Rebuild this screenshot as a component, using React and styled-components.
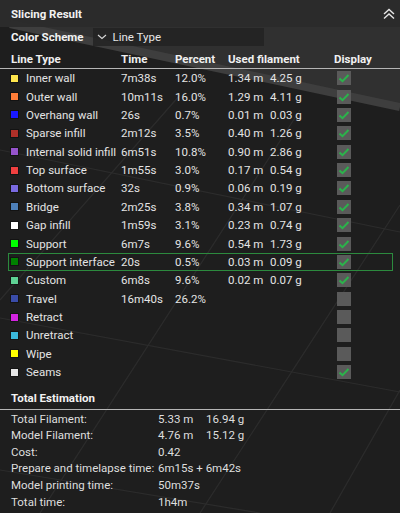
import styled, { createGlobalStyle } from 'styled-components'

const GlobalStyle = createGlobalStyle`
    html, body {
        margin: 0;
        padding: 0;
        background: #1e1e1e;
    }
    body {
        font-family: Roboto, "Liberation Sans", sans-serif;
        color: #e4e4e4;
    }
`

const lineTypes = [
    { name: 'Inner wall', color: '#ffe64d', time: '7m38s', percent: '12.0%', meters: '1.34 m', grams: '4.25 g', shown: true },
    { name: 'Outer wall', color: '#ff7d38', time: '10m11s', percent: '16.0%', meters: '1.29 m', grams: '4.11 g', shown: true },
    { name: 'Overhang wall', color: '#1919ff', time: '26s', percent: '0.7%', meters: '0.01 m', grams: '0.03 g', shown: true },
    { name: 'Sparse infill', color: '#b03029', time: '2m12s', percent: '3.5%', meters: '0.40 m', grams: '1.26 g', shown: true },
    { name: 'Internal solid infill', color: '#9654cc', time: '6m51s', percent: '10.8%', meters: '0.90 m', grams: '2.86 g', shown: true },
    { name: 'Top surface', color: '#f04040', time: '1m55s', percent: '3.0%', meters: '0.17 m', grams: '0.54 g', shown: true },
    { name: 'Bottom surface', color: '#7a6ae0', time: '32s', percent: '0.9%', meters: '0.06 m', grams: '0.19 g', shown: true },
    { name: 'Bridge', color: '#4d80ba', time: '2m25s', percent: '3.8%', meters: '0.34 m', grams: '1.07 g', shown: true },
    { name: 'Gap infill', color: '#ffffff', time: '1m59s', percent: '3.1%', meters: '0.23 m', grams: '0.74 g', shown: true },
    { name: 'Support', color: '#00ff00', time: '6m7s', percent: '9.6%', meters: '0.54 m', grams: '1.73 g', shown: true },
    { name: 'Support interface', color: '#008000', time: '20s', percent: '0.5%', meters: '0.03 m', grams: '0.09 g', shown: true, active: true },
    { name: 'Custom', color: '#5ed194', time: '6m8s', percent: '9.6%', meters: '0.02 m', grams: '0.07 g', shown: true },
    { name: 'Travel', color: '#3a4ca8', time: '16m40s', percent: '26.2%', shown: false },
    { name: 'Retract', color: '#d324e0', shown: false },
    { name: 'Unretract', color: '#3ab8db', shown: false },
    { name: 'Wipe', color: '#ffff00', shown: false },
    { name: 'Seams', color: '#e6e6e6', shown: true },
]

const estimation = [
    { label: 'Total Filament:', value: '5.33 m', extra: '16.94 g' },
    { label: 'Model Filament:', value: '4.76 m', extra: '15.12 g' },
    { label: 'Cost:', value: '0.42' },
    { label: 'Prepare and timelapse time:', value: '6m15s + 6m42s' },
    { label: 'Model printing time:', value: '50m37s' },
    { label: 'Total time:', value: '1h4m' },
]

const Viewport = styled.div`
    position: relative;
    width: 400px;
    height: 513px;
    overflow: hidden;
    background: #1e1e1e;
`

const Backdrop = styled.svg`
    position: absolute;
    inset: 0;
    width: 100%;
    height: 100%;
`

const Panel = styled.div`
    position: relative;
    display: flex;
    flex-direction: column;
    font-size: 11.5px;
`

const TitleBar = styled.div`
    display: flex;
    align-items: center;
    justify-content: space-between;
    height: 27px;
    padding: 0 4px 0 11px;
    box-sizing: border-box;
    background: rgba(44, 44, 44, 0.96);
`

const Heading = styled.div`
    font-weight: 700;
    font-size: ${props => props.size || '11.5px'};
    color: #f2f2f2;
`

const SchemeRow = styled.div`
    display: flex;
    align-items: center;
    gap: 9px;
    height: 20px;
    padding-left: 11px;
`

const SchemeSelect = styled.div`
    display: flex;
    align-items: center;
    gap: 6px;
    width: 171px;
    height: 18px;
    padding-left: 4px;
    box-sizing: border-box;
    background: rgba(32, 32, 32, 0.75);
    color: #e6e6e6;
`

const Grid = styled.div`
    display: grid;
    grid-template-columns: 110px 54px 53px 42px 64px 1fr;
    align-items: center;
`

const HeaderRow = styled(Grid)`
    height: 22px;
    padding: 2px 0 0 11px;
    box-sizing: border-box;
    border-bottom: 1px solid #b5b5b5;
    font-weight: 700;
    color: #f0f0f0;
`

const Span2 = styled.div`
    grid-column: span 2;
`

const Row = styled(Grid)`
    height: 18.375px;
    box-sizing: border-box;
    margin: 0 7px 0 8px;
    padding-left: 2px;
    border: 1px solid ${props => props.active ? '#2c8a3e' : 'transparent'};
    white-space: nowrap;
`

const NameCell = styled.div`
    display: flex;
    align-items: center;
    gap: 8px;
`

const Swatch = styled.span`
    width: 7px;
    height: 7px;
    background: ${props => props.color};
    box-shadow: 0 0 0 1px rgba(0, 0, 0, 0.35);
`

const CheckBox = styled.div`
    display: flex;
    align-items: center;
    justify-content: center;
    width: 14px;
    height: 14px;
    margin-left: 3px;
    background: #5a5a5a;
`

const SectionTitle = styled.div`
    display: flex;
    align-items: center;
    height: 23px;
    margin-top: 5px;
    padding-left: 11px;
    border-bottom: 1px solid #b5b5b5;
`

const EstimationList = styled.div`
    display: flex;
    flex-direction: column;
`

const EstimationRow = styled.div`
    display: grid;
    grid-template-columns: 147px 48px 1fr;
    align-items: center;
    height: 16.6px;
    padding-left: 11px;
    color: #dedede;
    white-space: nowrap;
`

const DoubleChevron = () => (
    <svg width="14" height="12" viewBox="0 0 14 12">
        <path d="M2 6 L7 1.5 L12 6 M2 10.5 L7 6 L12 10.5" fill="none" stroke="#e6e6e6" strokeWidth="1.4" />
    </svg>
)

const ChevronDown = () => (
    <svg width="10" height="6" viewBox="0 0 10 6">
        <path d="M1 1 L5 4.5 L9 1" fill="none" stroke="#d8d8d8" strokeWidth="1.1" />
    </svg>
)

const Check = () => (
    <svg width="12" height="10" viewBox="0 0 12 10">
        <path d="M1.5 5.5 L4.5 8.2 L10.5 2" fill="none" stroke="#2bb34b" strokeWidth="2" />
    </svg>
)

// plate and grid of the 3d view behind the panel
const SceneBackdrop = () => (
    <Backdrop viewBox="0 0 400 513" preserveAspectRatio="none">
        <rect width="400" height="513" fill="#1e1e1e" />
        <polygon points="20,27 400,27 400,104" fill="#303030" />
        <line x1="10" y1="24" x2="400" y2="107" stroke="#3e3e3e" strokeWidth="8" />
        <g stroke="#2c2c2c" strokeWidth="1.2" fill="none">
            <line x1="0" y1="150" x2="400" y2="232" />
            <line x1="0" y1="318" x2="400" y2="392" />
            <line x1="0" y1="470" x2="260" y2="513" />
            <line x1="300" y1="110" x2="40" y2="513" />
            <line x1="400" y1="205" x2="200" y2="513" />
            <line x1="180" y1="95" x2="0" y2="300" />
            <line x1="400" y1="390" x2="330" y2="513" />
        </g>
    </Backdrop>
)

const App = () => {
    return (
        <Viewport>
            <GlobalStyle />
            <SceneBackdrop />
            <Panel>
                <TitleBar>
                    <Heading size="11.5px">Slicing Result</Heading>
                    <DoubleChevron />
                </TitleBar>
                <SchemeRow>
                    <Heading>Color Scheme</Heading>
                    <SchemeSelect>
                        <ChevronDown />
                        <span>Line Type</span>
                    </SchemeSelect>
                </SchemeRow>
                <HeaderRow>
                    <div>Line Type</div>
                    <div>Time</div>
                    <div>Percent</div>
                    <Span2>Used filament</Span2>
                    <div>Display</div>
                </HeaderRow>
                {lineTypes.map(line => (
                    <Row key={line.name} active={line.active}>
                        <NameCell>
                            <Swatch color={line.color} />
                            <span>{line.name}</span>
                        </NameCell>
                        <div>{line.time}</div>
                        <div>{line.percent}</div>
                        <div>{line.meters}</div>
                        <div>{line.grams}</div>
                        <CheckBox>{line.shown && <Check />}</CheckBox>
                    </Row>
                ))}
                <SectionTitle>
                    <Heading>Total Estimation</Heading>
                </SectionTitle>
                <EstimationList>
                    {estimation.map(item => (
                        <EstimationRow key={item.label}>
                            <div>{item.label}</div>
                            <div>{item.value}</div>
                            <div>{item.extra}</div>
                        </EstimationRow>
                    ))}
                </EstimationList>
            </Panel>
        </Viewport>
    )
}

export default App
